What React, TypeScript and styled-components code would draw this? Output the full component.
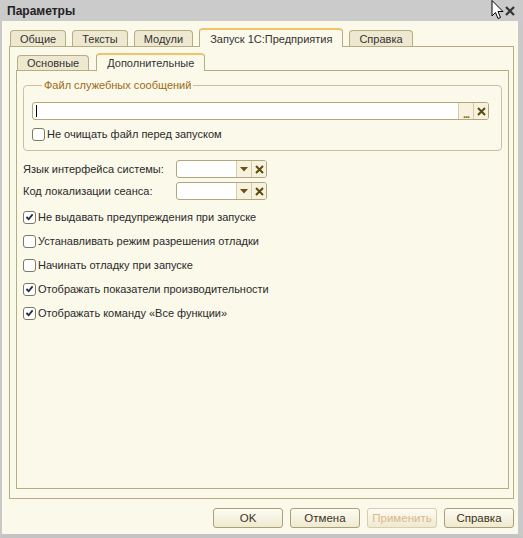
import React from 'react';
import styled, { createGlobalStyle } from 'styled-components';

const GlobalStyle = createGlobalStyle`
  html, body {
    margin: 0;
    padding: 0;
    background: #ffffff;
  }
  * {
    box-sizing: border-box;
  }
`;

const Window = styled.div`
  position: relative;
  width: 523px;
  height: 538px;
  display: flex;
  flex-direction: column;
  background: #fbf9ea;
  border-left: 2px solid #c9c9c9;
  border-right: 5px solid #c9c9c9;
  border-bottom: 4px solid #c4c4c4;
  font-family: "Liberation Sans", Arial, sans-serif;
  font-size: 11px;
  color: #2a2a2a;
`;

const TitleBar = styled.div`
  height: 21px;
  margin: 0 -5px 0 -2px;
  padding: 0 8px 0 7px;
  display: flex;
  align-items: center;
  justify-content: space-between;
  background: #cbcbcb;
  font-weight: bold;
  font-size: 12px;
  color: #222222;
`;

const CloseIcon = styled.svg`
  width: 10px;
  height: 10px;
`;

const Cursor = styled.svg`
  position: absolute;
  left: 489px;
  top: 0;
  width: 13px;
  height: 21px;
`;

const Body = styled.div`
  flex: 1;
  display: flex;
  flex-direction: column;
  padding: 7px 4px 0 7px;
`;

const TabStrip = styled.div<{ $inner?: boolean }>`
  display: flex;
  align-items: flex-end;
  gap: ${p => (p.$inner ? '7px' : '6px')};
  padding-left: 1px;
  height: ${p => (p.$inner ? '17px' : '18px')};
`;

const Tab = styled.div<{ $active?: boolean; $inner?: boolean }>`
  position: relative;
  z-index: ${p => (p.$active ? 1 : 0)};
  height: ${p => (p.$active ? (p.$inner ? '18px' : '19px') : p.$inner ? '15px' : '16px')};
  margin-bottom: ${p => (p.$active ? '-1px' : '0')};
  padding: 0 ${p => (p.$active ? '10px' : '9px')};
  display: flex;
  align-items: center;
  border: 1px solid #b8ac82;
  border-bottom: none;
  border-top: ${p => (p.$active ? '2px solid #f1c36b' : '1px solid #b8ac82')};
  border-radius: 4px 4px 0 0;
  background: ${p => (p.$active ? '#fbf9ea' : '#ede8cf')};
  white-space: nowrap;
  color: #333333;
`;

const Panel = styled.div<{ $inner?: boolean }>`
  flex: 1;
  display: flex;
  flex-direction: column;
  border: 1px solid #b8ac82;
  padding: ${p => (p.$inner ? '7px 6px 0 6px' : '6px 4px 9px 6px')};
`;

const GroupBox = styled.fieldset`
  margin: 0;
  padding: 10px 12px 9px 8px;
  border: 1px solid #cbc09a;
  border-radius: 4px;
  min-width: 0;
`;

const GroupTitle = styled.legend`
  padding: 0 2px;
  margin-left: 10px;
  color: #9c6a12;
  line-height: 14px;
`;

const FileField = styled.div`
  display: flex;
  height: 18px;
  border: 1px solid #b2a67b;
  border-radius: 3px;
  background: #ffffff;
  overflow: hidden;
`;

const FieldText = styled.div`
  flex: 1;
  display: flex;
  align-items: center;
  padding-left: 3px;
`;

const Caret = styled.span`
  width: 1px;
  height: 12px;
  background: #000000;
`;

const FieldButton = styled.div`
  width: 15px;
  display: flex;
  align-items: center;
  justify-content: center;
  border-left: 1px solid #d6cca8;
  background: #f6f2df;
  color: #8a6410;
  font-size: 11px;
  line-height: 1;
`;

const Dots = styled.span`
  padding-top: 6px;
  letter-spacing: -1px;
  font-weight: bold;
`;

const CheckRow = styled.label<{ $spaced?: boolean }>`
  display: flex;
  align-items: center;
  gap: 2px;
  height: 14px;
  margin-top: ${p => (p.$spaced ? '7px' : '0')};
  white-space: nowrap;
`;

const Box = styled.span`
  width: 13px;
  height: 13px;
  display: flex;
  align-items: center;
  justify-content: center;
  border: 1px solid #7f7a66;
  border-radius: 3px;
  background: #ffffff;
`;

const FormGrid = styled.div`
  display: grid;
  grid-template-columns: 153px 91px;
  row-gap: 4px;
  align-items: center;
  margin-top: 9px;
  white-space: nowrap;
`;

const Combo = styled(FileField)`
  width: 91px;
`;

const OptionList = styled.div`
  display: flex;
  flex-direction: column;
  gap: 10px;
  margin-top: 10px;
`;

const Footer = styled.div`
  display: flex;
  justify-content: flex-end;
  gap: 7px;
  padding: 9px 0 6px 0;
`;

const Button = styled.div<{ $disabled?: boolean }>`
  width: 70px;
  height: 20px;
  display: flex;
  align-items: center;
  justify-content: center;
  border: 1px solid #a9a07a;
  border-radius: 3px;
  background: linear-gradient(#fdfcf3, #efe9cf);
  color: ${p => (p.$disabled ? '#d8b98c' : '#3a3220')};
  border-color: ${p => (p.$disabled ? '#d8cfae' : '#a9a07a')};
  font-size: 11.5px;
`;

const Cross = () => (
  <svg width="9" height="9" viewBox="0 0 9 9">
    <path d="M1 1 L8 8 M8 1 L1 8" stroke="#5e4a0c" strokeWidth="2" />
  </svg>
);

const Arrow = () => (
  <svg width="8" height="5" viewBox="0 0 8 5">
    <path d="M0 0 H8 L4 4.5 Z" fill="#6a520c" />
  </svg>
);

const Check = () => (
  <svg width="9" height="8" viewBox="0 0 10 9">
    <path d="M1.5 4.5 L4 7 L8.5 1.5" stroke="#1f2a44" strokeWidth="2" fill="none" />
  </svg>
);

const CheckBox: React.FC<{ checked?: boolean; label: string; spaced?: boolean }> = ({ checked, label, spaced }) => (
  <CheckRow $spaced={spaced}>
    <Box>{checked && <Check />}</Box>
    {label}
  </CheckRow>
);

const options = [
  { label: 'Не выдавать предупреждения при запуске', checked: true },
  { label: 'Устанавливать режим разрешения отладки', checked: false },
  { label: 'Начинать отладку при запуске', checked: false },
  { label: 'Отображать показатели производительности', checked: true },
  { label: 'Отображать команду «Все функции»', checked: true },
];

const outerTabs = ['Общие', 'Тексты', 'Модули', 'Запуск 1С:Предприятия', 'Справка'];

const App: React.FC = () => {
  return (
    <>
      <GlobalStyle />
      <Window>
        <TitleBar>
          Параметры
          <CloseIcon viewBox="0 0 10 10">
            <path d="M1 1 L9 9 M9 1 L1 9" stroke="#333" strokeWidth="2.2" />
          </CloseIcon>
        </TitleBar>
        <Cursor viewBox="0 0 13 21">
          <path d="M1 0.5 L1 16 L4.5 12.5 L7 18.5 L9.5 17.5 L7 11.5 L12 11.5 Z" fill="#fff" stroke="#000" strokeWidth="1" />
        </Cursor>
        <Body>
          <TabStrip>
            {outerTabs.map(t => (
              <Tab key={t} $active={t === 'Запуск 1С:Предприятия'}>{t}</Tab>
            ))}
          </TabStrip>
          <Panel>
            <TabStrip $inner>
              <Tab $inner>Основные</Tab>
              <Tab $inner $active>Дополнительные</Tab>
            </TabStrip>
            <Panel $inner>
              <GroupBox>
                <GroupTitle>Файл служебных сообщений</GroupTitle>
                <FileField>
                  <FieldText><Caret /></FieldText>
                  <FieldButton><Dots>...</Dots></FieldButton>
                  <FieldButton><Cross /></FieldButton>
                </FileField>
                <CheckBox spaced label="Не очищать файл перед запуском" />
              </GroupBox>

              <FormGrid>
                <span>Язык интерфейса системы:</span>
                <Combo>
                  <FieldText />
                  <FieldButton><Arrow /></FieldButton>
                  <FieldButton><Cross /></FieldButton>
                </Combo>
                <span>Код локализации сеанса:</span>
                <Combo>
                  <FieldText />
                  <FieldButton><Arrow /></FieldButton>
                  <FieldButton><Cross /></FieldButton>
                </Combo>
              </FormGrid>

              <OptionList>
                {options.map(o => (
                  <CheckBox key={o.label} label={o.label} checked={o.checked} />
                ))}
              </OptionList>
            </Panel>
          </Panel>
          <Footer>
            <Button>OK</Button>
            <Button>Отмена</Button>
            <Button $disabled>Применить</Button>
            <Button>Справка</Button>
          </Footer>
        </Body>
      </Window>
    </>
  );
};

export default App;
